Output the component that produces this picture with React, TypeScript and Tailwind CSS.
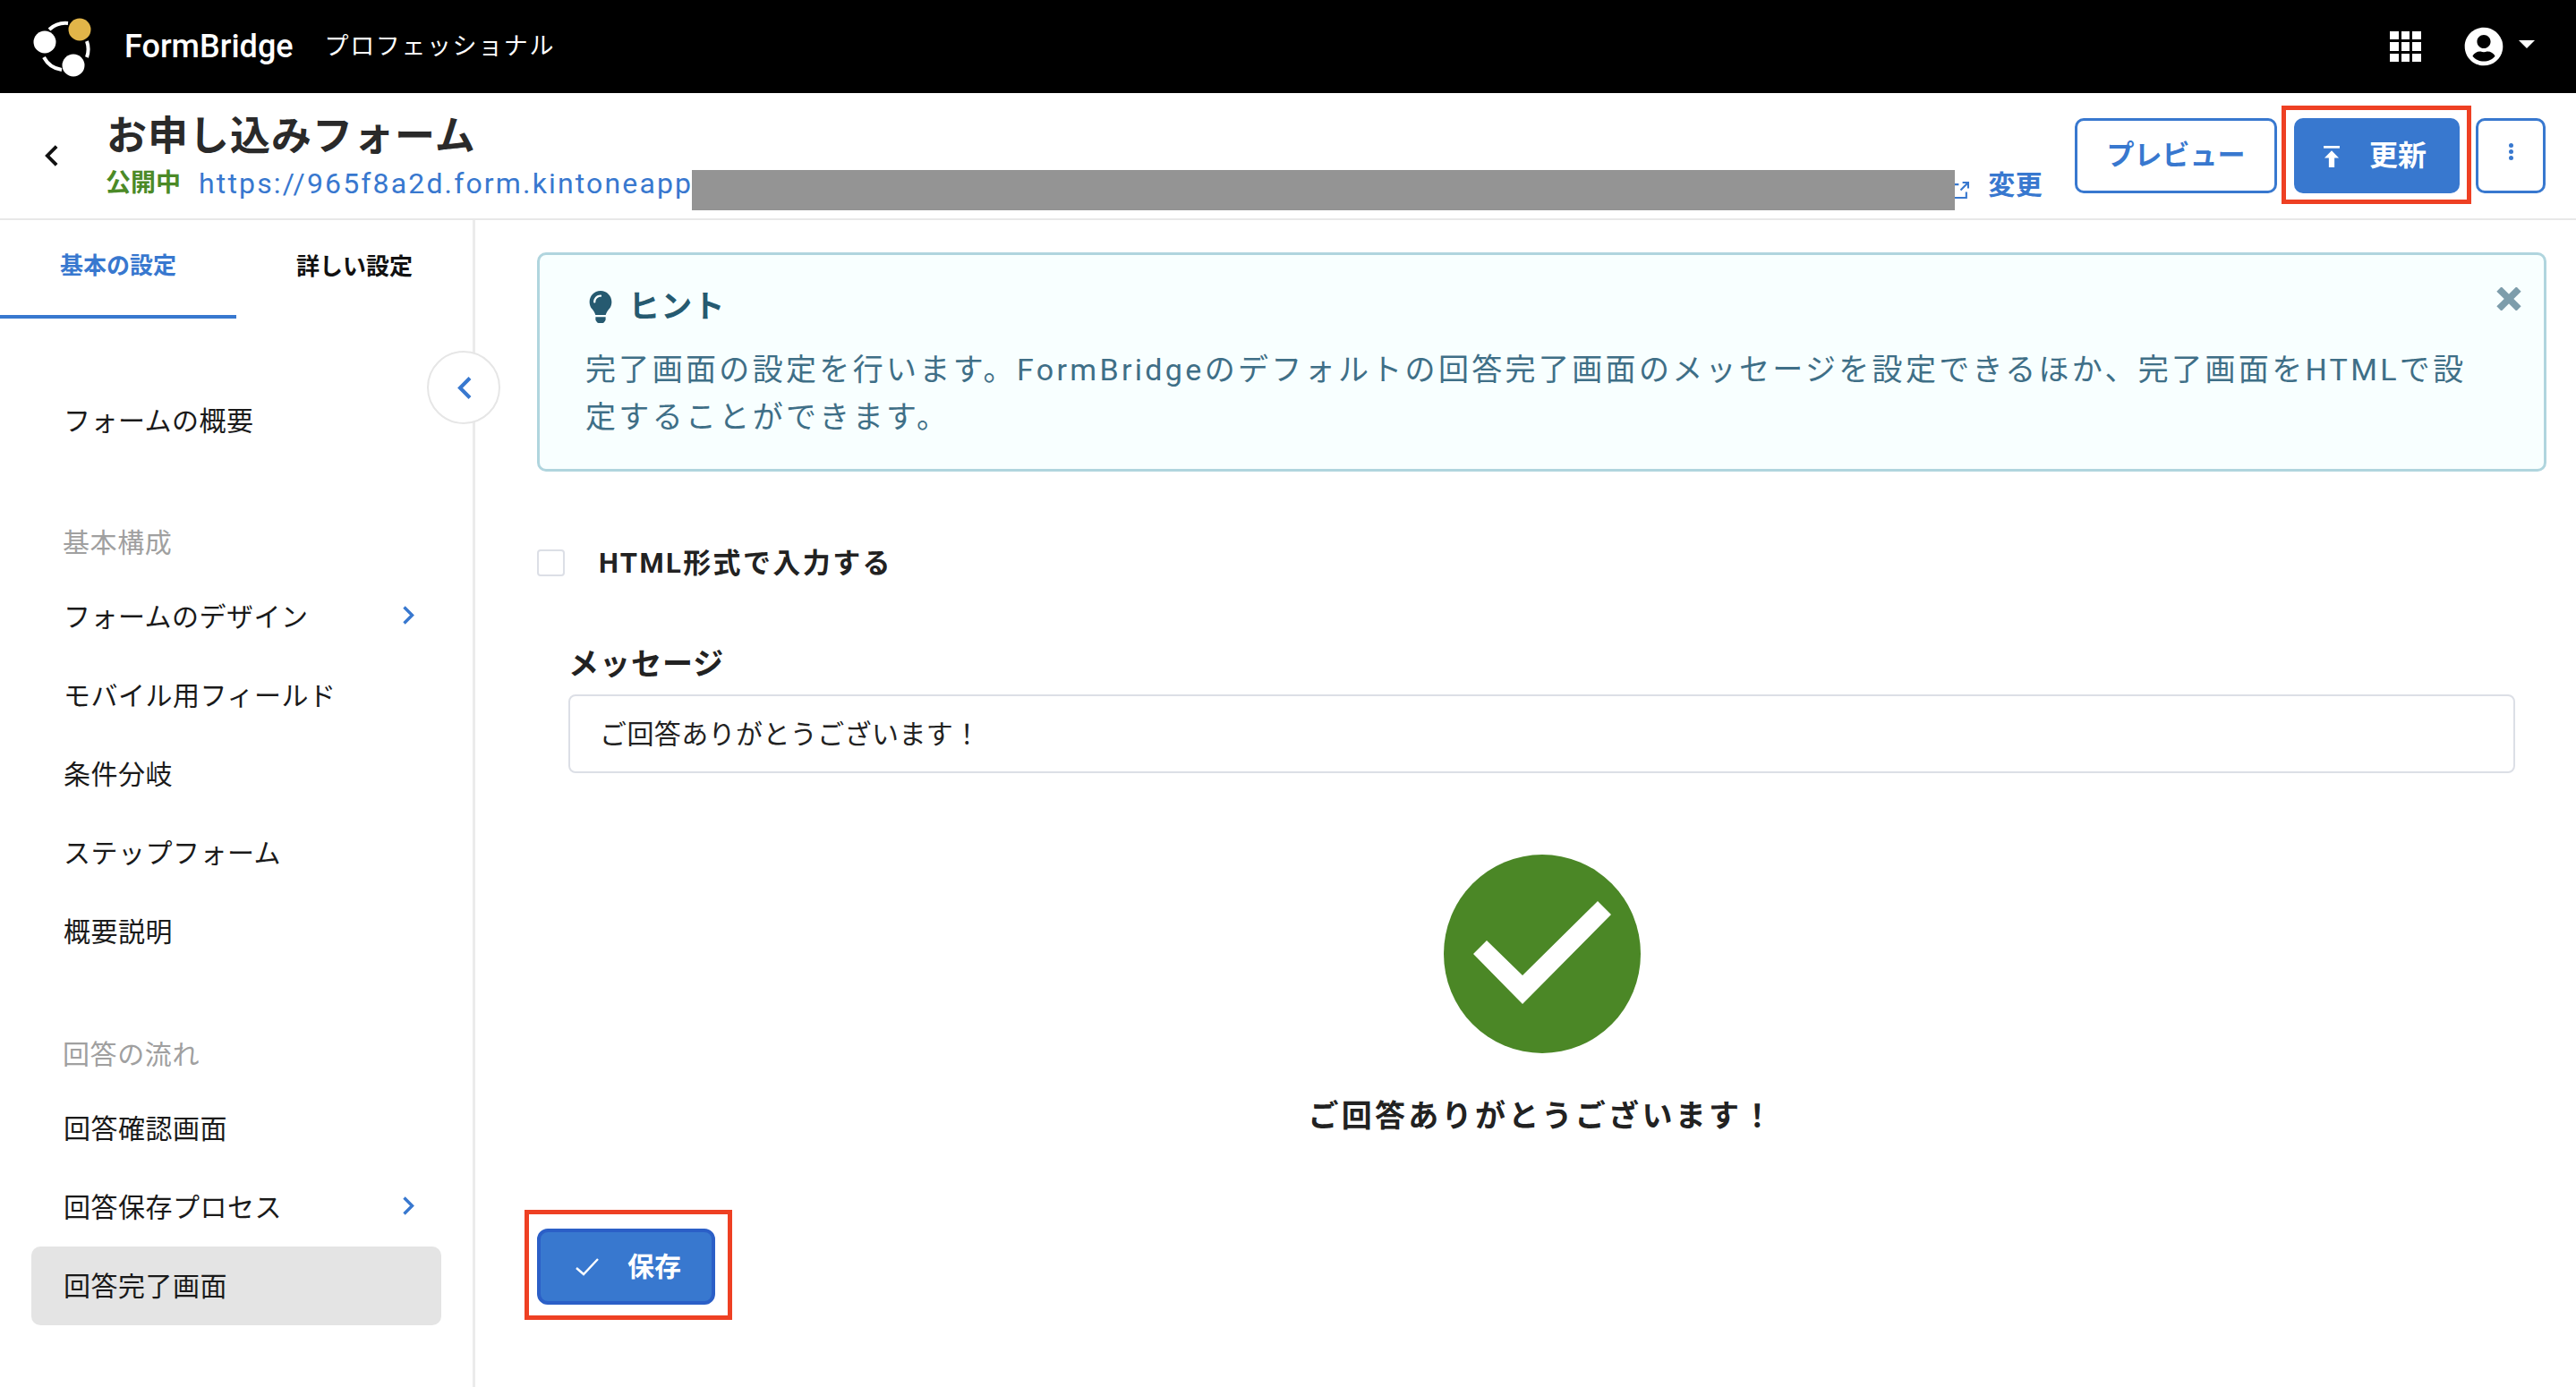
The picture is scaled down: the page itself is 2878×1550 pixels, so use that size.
import React from "react";
import { FaLightbulb, FaUserCircle } from "react-icons/fa";

const font = "font-['Roboto','Noto_Sans_CJK_JP',sans-serif]";

function Logo() {
  return (
    <svg viewBox="30 10 80 80" className="w-[80px] h-[80px] shrink-0">
      <g fill="none" stroke="#fff" strokeWidth="4">
        <path d="M55 31 A27 27 0 0 1 76 24" />
        <path d="M97 44 A27 27 0 0 1 97 62" />
        <path d="M49 62 A27 27 0 0 0 69 76" />
      </g>
      <circle cx="50" cy="45" r="12.5" fill="#fff" />
      <circle cx="89" cy="31" r="12.5" fill="#e2b549" />
      <circle cx="82" cy="71" r="12.5" fill="#fff" />
    </svg>
  );
}

function Chevron({ dir = "right", className = "" }: { dir?: "right" | "left"; className?: string }) {
  return (
    <svg viewBox="0 0 14 22" className={className} fill="none" stroke="currentColor" strokeWidth="3.4">
      <path d={dir === "right" ? "M2.5 2 L11.5 11 L2.5 20" : "M11.5 2 L2.5 11 L11.5 20"} />
    </svg>
  );
}

function Apps() {
  return (
    <div className="grid grid-cols-3 gap-[3px] w-[35px]">
      {Array.from({ length: 9 }).map((_, i) => (
        <div key={i} className="w-[9.6px] h-[9.6px] bg-white" />
      ))}
    </div>
  );
}

function NavItem({ label, arrow, active }: { label: string; arrow?: boolean; active?: boolean }) {
  return (
    <div className={`h-[88px] mx-[35px] pl-[36px] pr-[30px] flex items-center justify-between rounded-[10px] text-[30px] tracking-[0.5px] text-[#1a1a1a] ${active ? "bg-[#e4e4e4]" : ""}`}>
      <span>{label}</span>
      {arrow && <Chevron className="w-[14px] h-[23px] text-[#3878cf] mb-[4px]" />}
    </div>
  );
}

function NavHead({ label, mt }: { label: string; mt: string }) {
  return <div className={`${mt} h-[50px] pl-[70px] flex items-center text-[30px] tracking-[0.6px] text-[#a0a0a0]`}>{label}</div>;
}

function Annot({ className }: { className: string }) {
  return <div className={`absolute border-[5px] border-[#ee4023] pointer-events-none ${className}`} />;
}

export default function App() {
  return (
    <div className={`${font} w-[2878px] h-[1550px] bg-white flex flex-col overflow-hidden text-[#222]`}>
      {/* top bar */}
      <header className="h-[104px] shrink-0 bg-black flex items-center pl-[30px] pr-[46px] text-white">
        <Logo />
        <span className="ml-[29px] text-[36px] font-medium leading-none">FormBridge</span>
        <span className="ml-[35px] text-[27px] tracking-[1.6px] leading-none">プロフェッショナル</span>
        <div className="ml-auto flex items-center">
          <Apps />
          <FaUserCircle className="ml-[48px] text-[44px]" />
          <div className="ml-[17px] mb-[6px] w-0 h-0 border-x-[9.5px] border-x-transparent border-t-[9px] border-t-white" />
        </div>
      </header>

      {/* sub header */}
      <div className="h-[142px] shrink-0 border-b-2 border-[#e8e8e8] flex items-start">
        <div className="w-[119px] shrink-0 pl-[50px] pt-[57px]">
          <Chevron dir="left" className="w-[16px] h-[26px] text-[#111]" />
        </div>
        <div className="w-[2199px] shrink-0 pt-[23px]">
          <div className="text-[45px] font-bold leading-[52px] text-[#2a2a2a] tracking-[1px]">お申し込みフォーム</div>
          <div className="flex items-center h-[48px] mt-[2px]">
            <span className="w-[103px] shrink-0 -ml-[1px] mr-[1px] text-[28px] font-bold text-[#4b8a27] leading-none">公開中</span>
            <span className="text-[32px] tracking-[2.15px] text-[#3878cf] leading-none whitespace-nowrap">https://965f8a2d.form.kintoneapp</span>
            <div className="relative z-10 -ml-[1px] w-[1411px] h-[45px] shrink-0 bg-[#949494] mt-[14px]" />
            <svg viewBox="0 0 18 18" className="-ml-[3px] w-[19px] h-[19px] shrink-0 mt-[14px] text-[#3878cf]" fill="none" stroke="currentColor" strokeWidth="2">
              <path d="M1 3H7M15 11V17H1V3M9 9L16 2M11 1H17V7" />
            </svg>
            <span className="ml-[21px] text-[30px] tracking-[0.5px] font-bold text-[#3878cf] leading-none mt-[4px] whitespace-nowrap">変更</span>
          </div>
        </div>
        <div className="ml-auto mr-[34px] mt-[28px] flex items-start">
          <div className="w-[226px] h-[84px] -ml-[40px] rounded-[10px] border-[3px] border-[#3878cf] flex items-center justify-center text-[31px] font-bold text-[#3878cf] whitespace-nowrap">プレビュー</div>
          <div className="relative ml-[19px] w-[185px] h-[84px] rounded-[10px] bg-[#3878cf] flex items-center pl-[33px] text-white">
            <svg viewBox="0 0 20 28" className="w-[18px] h-[25px] mt-[2px]" fill="currentColor">
              <rect x="0" y="0" width="20" height="3" />
              <path d="M10 6 L19 15 H13.5 V27 H6.5 V15 H1 Z" />
            </svg>
            <span className="ml-[33px] text-[32px] font-bold leading-none">更新</span>
            <Annot className="-left-[14px] -right-[13px] -top-[14px] -bottom-[12px]" />
          </div>
          <div className="ml-[18px] w-[78px] h-[84px] rounded-[10px] border-[3px] border-[#3878cf] flex flex-col items-center pt-[25px] gap-[2px]">
            <div className="w-[5px] h-[5px] rounded-full bg-[#3878cf]" />
            <div className="w-[5px] h-[5px] rounded-full bg-[#3878cf]" />
            <div className="w-[5px] h-[5px] rounded-full bg-[#3878cf]" />
          </div>
        </div>
      </div>

      <div className="flex-1 flex min-h-0">
        {/* sidebar */}
        <aside className="relative w-[531px] shrink-0 border-r-[3px] border-[#ebebeb]">
          <div className="flex h-[110px]">
            <div className="w-[264px] h-full border-b-4 border-[#3878cf] flex items-center justify-center pb-[3px] text-[26px] font-bold text-[#3878cf]">基本の設定</div>
            <div className="w-[264px] h-full flex items-center justify-center pb-[5px] text-[26px] font-bold text-[#111]">詳しい設定</div>
          </div>
          <div className="mt-[70px]">
            <NavItem label="フォームの概要" />
            <NavHead label="基本構成" mt="mt-[67px]" />
            <div className="mt-[14px]">
              <NavItem label="フォームのデザイン" arrow />
              <NavItem label="モバイル用フィールド" />
              <NavItem label="条件分岐" />
              <NavItem label="ステップフォーム" />
              <NavItem label="概要説明" />
            </div>
            <NavHead label="回答の流れ" mt="mt-[68px]" />
            <div className="mt-[14px]">
              <NavItem label="回答確認画面" />
              <NavItem label="回答保存プロセス" arrow />
              <NavItem label="回答完了画面" active />
            </div>
          </div>
          <div className="absolute left-[477px] top-[146px] w-[82px] h-[82px] rounded-full bg-white border-2 border-[#e6e6e6] flex items-center justify-center">
            <Chevron dir="left" className="w-[17px] h-[27px] text-[#3878cf] ml-[2px]" />
          </div>
        </aside>

        {/* main */}
        <main className="flex-1 min-w-0 pl-[69px] pr-[33px] pt-[36px]">
          <section className="relative h-[245px] rounded-[10px] border-[3px] border-[#b0d5de] bg-[#f8ffff] pl-[51px] pr-[70px] pt-[38px]">
            <div className="flex items-center h-[40px] text-[#265a70]">
              <FaLightbulb className="text-[36px] -ml-[1px]" />
              <span className="ml-[13px] text-[35px] font-bold leading-none tracking-[1.2px]">ヒント</span>
            </div>
            <p className="mt-[24px] text-[34px] leading-[53px] tracking-[3.33px] text-[#3f6f87]">
              完了画面の設定を行います。FormBridgeのデフォルトの回答完了画面のメッセージを設定できるほか、完了画面をHTMLで設定することができます。
            </p>
            <svg viewBox="0 0 28 26" className="absolute right-[25px] top-[36px] w-[28px] h-[26px] text-[#7d9dab]" fill="none" stroke="currentColor" strokeWidth="7.5">
              <path d="M3 2 L25 24 M25 2 L3 24" />
            </svg>
          </section>

          <div className="mt-[87px] flex items-center h-[30px]">
            <div className="w-[31px] h-[30px] rounded-[4px] border-2 border-[#dcdfe6] bg-white" />
            <span className="ml-[38px] text-[31px] font-bold leading-none tracking-[2.4px] text-[#222]">HTML形式で入力する</span>
          </div>

          <div className="pl-[35px] pr-[35px]">
            <div className="mt-[78px] h-[40px] flex items-center text-[34px] font-bold tracking-[1px] leading-none">メッセージ</div>
            <div className="mt-[14px] h-[88px] rounded-[8px] border-2 border-[#dcdfe6] flex items-center pl-[33px] text-[30px] tracking-[0.4px] text-[#222]">
              ご回答ありがとうございます！
            </div>
            <div className="mt-[91px] flex flex-col items-center">
              <svg viewBox="0 0 220 222" className="w-[220px] h-[222px]">
                <ellipse cx="110" cy="111" rx="110" ry="111" fill="#4b8726" />
                <path d="M33 111 L48 96 L88 135 L172 52 L187 67 L88 167 Z" fill="#fff" />
              </svg>
              <div className="mt-[49px] h-[42px] flex items-center text-[34px] font-bold tracking-[3.3px] leading-none text-[#222] whitespace-nowrap">ご回答ありがとうございます！</div>
            </div>
          </div>

          <div className="relative mt-[105px] w-[199px] h-[85px] rounded-[12px] border-4 border-[#2b5fc7] bg-[#3878cf] flex items-center pl-[39px] text-white">
            <svg viewBox="0 0 26 20" className="w-[26px] h-[20px]" fill="none" stroke="currentColor" strokeWidth="2.4">
              <path d="M1 11 L9 18 L25 1" />
            </svg>
            <span className="ml-[32px] text-[30px] font-bold leading-none">保存</span>
            <Annot className="-left-[18px] -right-[23px] -top-[25px] -bottom-[21px]" />
          </div>
        </main>
      </div>
    </div>
  );
}
